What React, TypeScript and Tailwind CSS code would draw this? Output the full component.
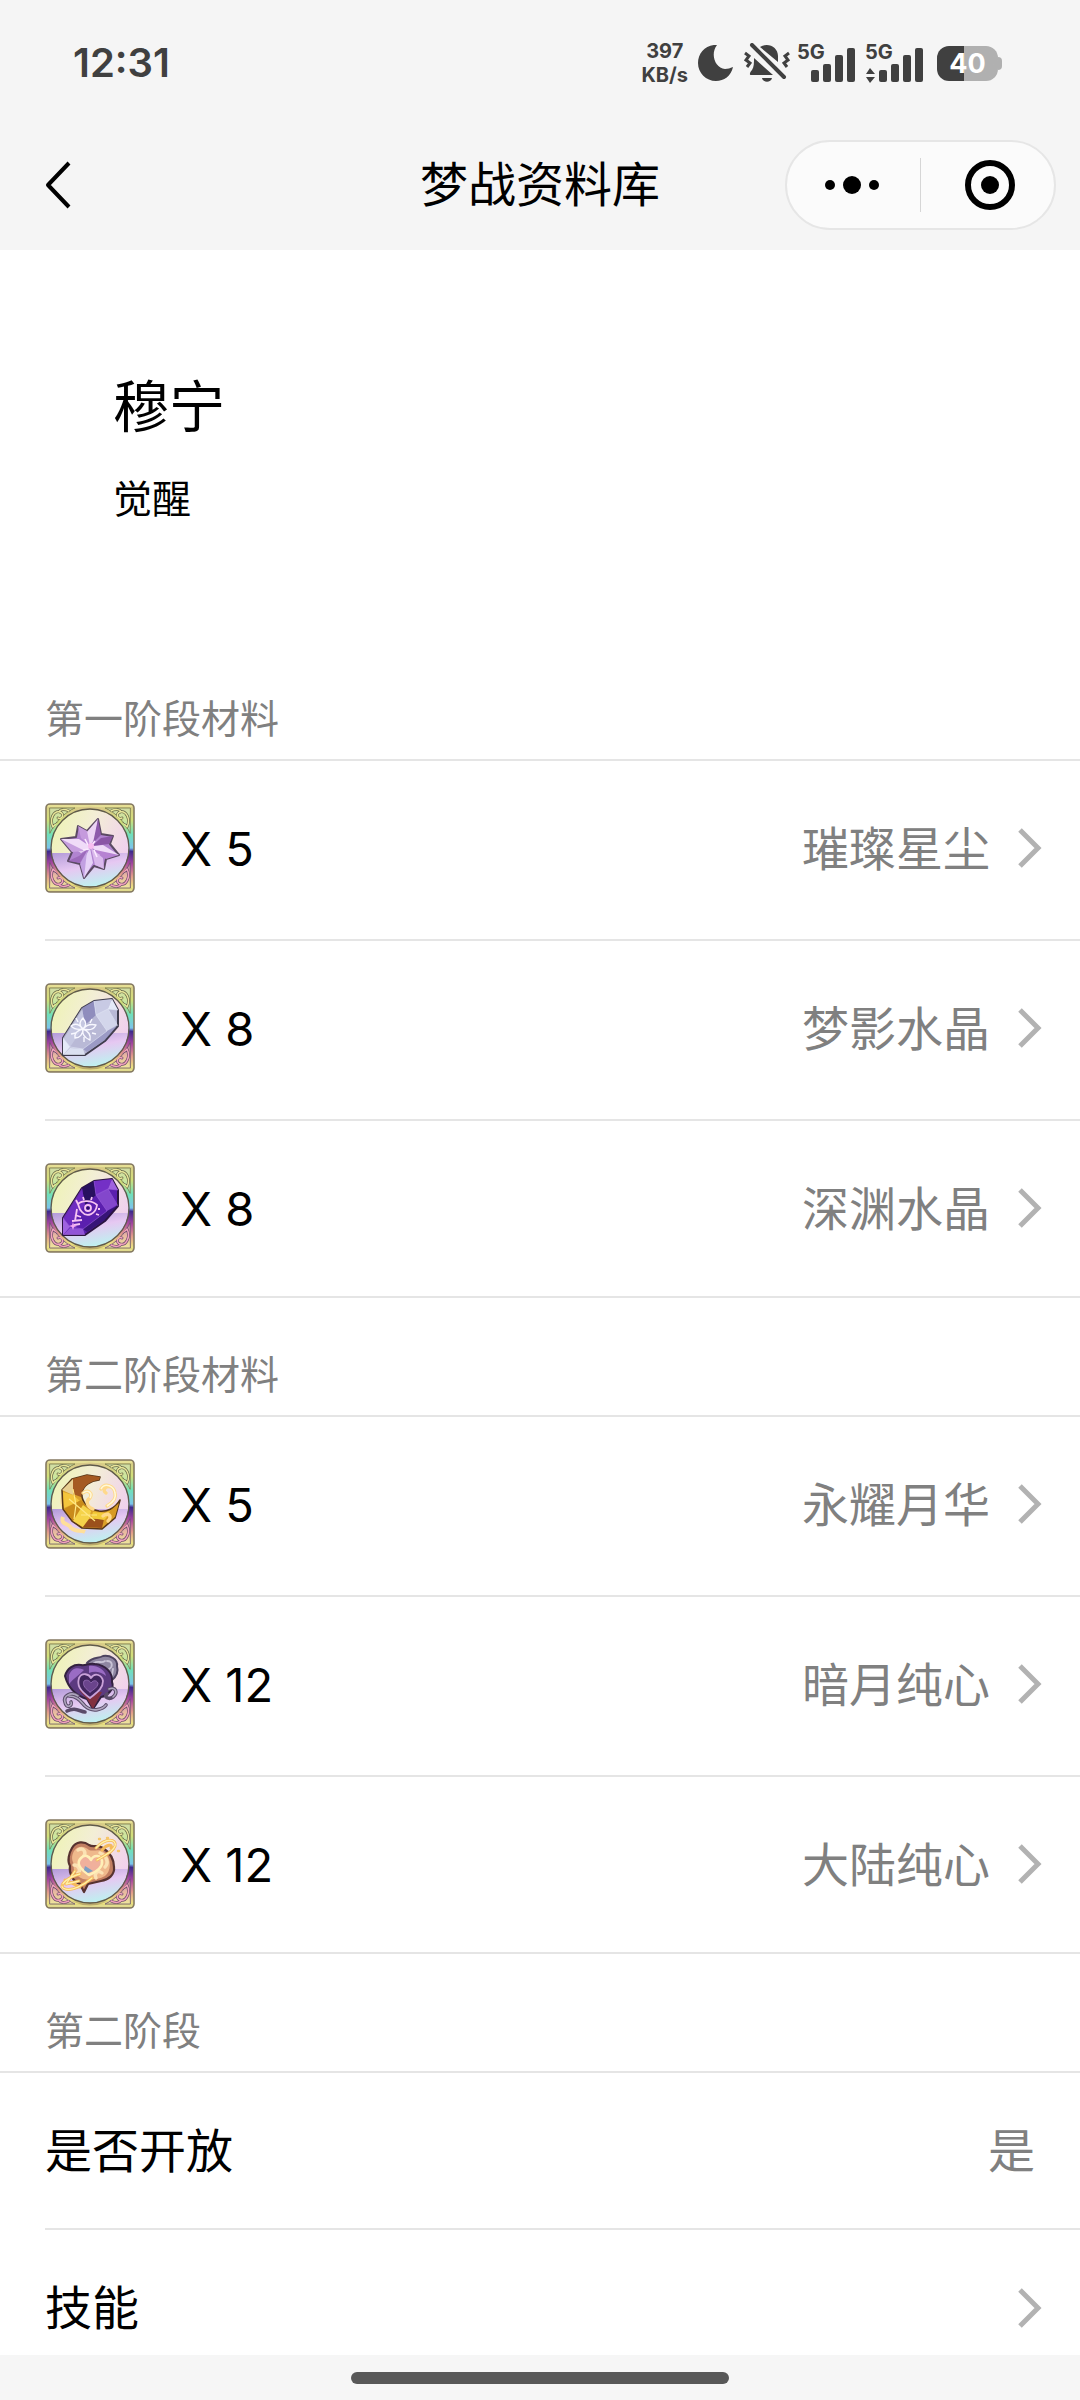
import React from "react";

interface Material {
  count: number;
  name: string;
  art: React.ReactNode;
}

const StarArt = () => (
  <g strokeLinejoin="round">
    <path d="M53 16 56 31 68 33 65 41 74 52 61 56 59 66 49 63 39 75 35 61 23 58 27 49 16 36 31 34 33 23 42 28Z" fill="#b184d0" stroke="#5b4a63" strokeWidth="2" />
    <path d="M53 16 50 36 42 46 41 30Z" fill="#ecd4f5" />
    <path d="M53 16 56 32 48 40Z" fill="#8d5aab" />
    <path d="M16 36 34 36 46 44 36 50Z" fill="#f0dcf8" />
    <path d="M16 36 27 49 40 48Z" fill="#c79fdf" />
    <path d="M74 52 58 42 46 43 54 52Z" fill="#efdbf8" />
    <path d="M74 52 61 56 46 46Z" fill="#b682d2" />
    <path d="M39 75 38 58 45 45 48 60Z" fill="#e6d2f7" />
    <path d="M39 75 35 61 42 48Z" fill="#c2a0e2" />
    <path d="M33 23 36 35 45 43 42 28Z" fill="#c59add" />
    <path d="M68 33 56 35 47 43 64 41Z" fill="#8a56a6" />
    <path d="M59 66 58 55 46 45 50 62Z" fill="#dab9ec" />
    <path d="M23 58 34 53 43 46 35 60Z" fill="#9d6abb" />
    <path d="M40 36 43 42M50 38 46 43M38 47 44 46M49 47 52 54" stroke="#fbeaff" strokeWidth="1.6" fill="none" />
    <circle cx="46" cy="43" r="3" fill="#f7bdf0" />
  </g>
);

interface CrystalProps {
  base: string;
  dark: string;
  mid: string;
  light: string;
  outline: string;
  children: React.ReactNode;
}

const CrystalArt = ({ base, dark, mid, light, outline, children }: CrystalProps) => (
  <g strokeLinejoin="round">
    <path d="M18 55 37 25 49 18 67 16 73 27 73 43 60 58 40 72 18 72Z" fill={base} stroke={outline} strokeWidth="2" />
    <path d="M37 25 49 18 51 32 40 42Z" fill={dark} />
    <path d="M49 18 67 16 63 26 51 32Z" fill={mid} />
    <path d="M67 16 73 27 63 26Z" fill={light} />
    <path d="M51 32 63 26 72 42 62 48Z" fill={light} opacity="0.6" />
    <path d="M62 48 72 43 60 57 42 69 38 66Z" fill={dark} opacity="0.7" />
    <path d="M18 55 37 25 40 42 25 64Z" fill={mid} opacity="0.8" />
    <path d="M18 55 25 64 18 72Z" fill={light} />
    <path d="M18 72 25 65 38 66 40 72Z" fill={light} opacity="0.8" />
    <path d="M49 18 51 32 62 48 38 66 25 64 18 55M51 32 63 26 73 27M63 26 73 43" fill="none" stroke={light} strokeWidth="0.8" opacity="0.7" />
    {children}
  </g>
);

const DreamCrystalArt = () => (
  <CrystalArt base="#b9b9d6" dark="#8f8dbd" mid="#c8cae4" light="#e4eaf8" outline="#3f3c4d">
    <g fill="none" stroke="#f8f8ff" strokeWidth="1.4">
      <path d="M38 46C33 42 35 38 38 35 41 39 42 42 38 46ZM38 46C42 41 47 41 51 42 49 46 45 48 38 46ZM38 46C43 48 46 52 45 57 40 55 37 51 38 46ZM38 46C38 51 35 55 30 55 29 51 32 47 38 46ZM38 46C33 47 29 46 26 43 30 40 34 41 38 46Z" />
      <path d="M33 39 31 35M45 40 47 36M47 50 51 51M39 54 39 59M31 50 26 51" />
    </g>
  </CrystalArt>
);

const AbyssCrystalArt = () => (
  <CrystalArt base="#5b1fae" dark="#28105f" mid="#7430c6" light="#9f62e0" outline="#2b1440">
    <g fill="none" stroke="#f7c4f2" strokeWidth="1.8">
      <path d="M33 41C37 37 47 37 52 42 51 51 42 55 37 49 34 47 34 43 33 41Z" />
      <path d="M33 41 31 37M39 37 38 34M46 37 47 34M51 51 54 52M53 46 55 46M32 46 30 58M27 58 37 57M30 52 36 54M29 62 35 61" />
      <circle cx="43" cy="45" r="3" />
    </g>
    <circle cx="43" cy="45" r="1.5" fill="#28105f" />
    <path d="M28 67 29 64 32 63 29 62 28 59 27 62 24 63 27 64Z" fill="#f3a8f5" />
  </CrystalArt>
);

const CrescentArt = () => (
  <g strokeLinejoin="round">
    <path d="M18 58C15 66 24 64 26 69 31 73 36 71 40 73M20 36C15 40 18 50 22 52" fill="none" stroke="#ffdf9a" strokeWidth="4" />
    <path d="M55 18 42 16 27 20 17 31 18 50 27 62 37 69 57 70 70 59 75 41C70 50 61 53 54 52 42 50 36 42 37 34 38 26 46 22 54 21Z" fill="#dba12a" stroke="#57371a" strokeWidth="1.6" />
    <path d="M55 18 42 16 27 20 28 35 36 38C37 27 45 22 54 21Z" fill="#a55a22" />
    <path d="M28 20 17 31 28 36Z" fill="#e8cf92" />
    <path d="M18 33 19 49 35 42 28 36Z" fill="#f4c53c" />
    <path d="M19 50 28 62 44 50 36 41Z" fill="#c98a1a" />
    <path d="M28 62 38 68 44 60 46 52 38 46Z" fill="#f5d34a" />
    <path d="M44 60 59 60 57 69 38 68Z" fill="#9b511c" />
    <path d="M48 53 60 54 70 50 59 61 46 59Z" fill="#f2cb3a" />
    <path d="M61 60 70 58 74 44 65 52Z" fill="#d89a22" />
    <path d="M24 40 36 50 50 62M28 30 31 46 29 60M36 56 52 56" fill="none" stroke="#ffe783" strokeWidth="1.2" />
    <path d="M38 34C43 30 48 34 45 39 40 42 42 48 48 50M56 30C60 23 69 27 70 34 72 40 67 44 62 47M66 28C60 26 57 32 61 34M58 57C63 53 68 57 63 62" fill="none" stroke="#ffd98a" strokeWidth="3.4" strokeLinecap="round" />
    <path d="M38 34C43 30 48 34 45 39M56 30C60 23 69 27 70 34 72 40 67 44 62 47" fill="none" stroke="#fff8d8" strokeWidth="1.6" />
  </g>
);

const DarkHeartArt = () => (
  <g strokeLinejoin="round" strokeLinecap="round">
    <path d="M42 24C48 17 53 20 58 17 65 16 73 20 72 27 74 34 70 39 66 42" fill="#8f86a2" stroke="#4d4260" strokeWidth="2" />
    <path d="M49 24C54 21 56 25 60 22M62 22C68 22 68 28 64 30M68 30 67 36" fill="none" stroke="#c9c3d6" strokeWidth="1.8" />
    <path d="M20 37C22 29 29 25 36 26 41 27 43 24 50 25 60 26 68 33 67 43 70 50 62 57 56 58L48 70 42 60C29 56 23 48 20 37Z" fill="#5c3a80" stroke="#33213f" strokeWidth="2" />
    <path d="M34 51 57 53 48 70 42 60Z" fill="#81303f" />
    <path d="M24 36C27 28 34 28 39 31 34 36 29 39 24 45ZM44 27C52 26 60 31 61 37 55 32 49 32 44 34Z" fill="#9a6cc4" />
    <path d="M45 59C34 51 32 46 34 39 37 33 44 35 46 39 50 33 57 36 58 42 58 50 51 54 45 59Z" fill="#40255d" stroke="#c9a2d8" strokeWidth="1.8" />
    <path d="M45 53C38 48 38 45 39 42 42 40 45 42 46 44 49 40 53 42 53 45 52 49 48 51 45 53Z" fill="#6a448c" stroke="#8d65ad" strokeWidth="1" />
    <path d="M33 57C26 52 18 57 20 63 21 70 28 67 26 63M24 57C33 57 36 63 40 67 48 74 58 70 61 66M22 72C30 68 34 72 40 73M64 50C71 47 73 54 68 58 64 61 58 58 62 55" fill="none" stroke="#5a4b69" strokeWidth="3.6" />
    <path d="M33 57C26 52 18 57 20 63 21 70 28 67 26 63M24 57C33 57 36 63 40 67 48 74 58 70 61 66M64 50C71 47 73 54 68 58" fill="none" stroke="#aea5bd" strokeWidth="1.6" />
  </g>
);

const LandHeartArt = () => (
  <g strokeLinejoin="round" strokeLinecap="round">
    <path d="M27 29C31 22 39 22 44 26 48 29 52 25 58 29 64 33 69 39 69 48 70 56 63 61 56 62L43 65 39 73 35 65C27 62 24 54 25 47 22 42 24 34 27 29Z" fill="#c27f62" stroke="#573230" strokeWidth="2.2" />
    <path d="M29 32C33 26 40 27 44 31 49 33 55 29 60 34 67 40 66 53 60 57 53 61 44 61 38 60 29 56 28 50 29 45 26 40 27 36 29 32Z" fill="#efb98c" />
    <path d="M33 31C39 28 42 34 38 38M55 34C62 37 64 44 60 48M29 46C34 46 36 52 33 54M57 54C52 50 49 55 51 59" fill="none" stroke="#fbe2b4" strokeWidth="3.4" />
    <path d="M44 56C34 49 31 44 36 39 40 35 44 37 46 41 49 35 56 36 57 42 58 48 51 53 44 56Z" fill="#f0b09c" stroke="#fff0b8" strokeWidth="2.6" />
    <path d="M40 47 48 52 43 54 39 51Z" fill="#7c9fc4" />
    <path d="M51 29C61 18 72 20 70 27 68 33 60 36 52 41M57 31C62 25 68 25 66 29M35 55C24 58 14 65 18 69 26 74 40 65 47 59M30 52 21 65 34 62M20 61 35 68" fill="none" stroke="#f5b95a" strokeWidth="3" />
    <path d="M51 29C61 18 72 20 70 27 68 33 60 36 52 41M35 55C24 58 14 65 18 69 26 74 40 65 47 59M30 52 21 65 34 62" fill="none" stroke="#fff1a8" strokeWidth="1.3" />
    <path d="M62 19h1M73 32h1M17 66h1M54 20h1" stroke="#f7c66a" strokeWidth="2.4" />
  </g>
);

const stageOne: Material[] = [
  { count: 5, name: "璀璨星尘", art: <StarArt /> },
  { count: 8, name: "梦影水晶", art: <DreamCrystalArt /> },
  { count: 8, name: "深渊水晶", art: <AbyssCrystalArt /> },
];

const stageTwo: Material[] = [
  { count: 5, name: "永耀月华", art: <CrescentArt /> },
  { count: 12, name: "暗月纯心", art: <DarkHeartArt /> },
  { count: 12, name: "大陆纯心", art: <LandHeartArt /> },
];

// Gradients and the corner ornament shared by all item frames
const FrameDefs = () => (
  <svg className="absolute size-0" aria-hidden="true">
    <defs>
      <linearGradient id="frame" x1="0" y1="0" x2="0" y2="1">
        <stop offset="0" stopColor="#d9c98a" />
        <stop offset="0.18" stopColor="#d3e07a" />
        <stop offset="0.34" stopColor="#6fe0b8" />
        <stop offset="0.5" stopColor="#7cc4ea" />
        <stop offset="0.54" stopColor="#3f2a8c" />
        <stop offset="0.68" stopColor="#a5469f" />
        <stop offset="0.82" stopColor="#e29a8c" />
        <stop offset="0.95" stopColor="#ece583" />
        <stop offset="1" stopColor="#b9a86a" />
      </linearGradient>
      <linearGradient id="discTop" x1="0" y1="0.2" x2="1" y2="0.6">
        <stop offset="0" stopColor="#eef3b4" />
        <stop offset="0.45" stopColor="#f3eed6" />
        <stop offset="1" stopColor="#f0cdf0" />
      </linearGradient>
      <linearGradient id="discBottom" x1="0" y1="0" x2="0.4" y2="1">
        <stop offset="0" stopColor="#b29ad8" />
        <stop offset="0.5" stopColor="#e6c8f2" />
        <stop offset="1" stopColor="#bff0f0" />
      </linearGradient>
      <g id="corner" fill="none" strokeLinecap="round">
        <path d="M5 5H30C19 10 10 19 5 30Z" fill="#c8f0d0" fillOpacity="0.4" stroke="#77784a" strokeWidth="0.8" />
        <path d="M8 24C4 16 9 7 15 9 20 11 17 17 13 15M24 8C20 6 15 6 14 9M8 24C10 20 16 21 17 17" stroke="#656548" strokeWidth="2.8" />
        <path d="M8 24C4 16 9 7 15 9 20 11 17 17 13 15M24 8C20 6 15 6 14 9M8 24C10 20 16 21 17 17" stroke="#e9e79a" strokeWidth="1.5" />
      </g>
      <g id="cornerPink" fill="none" strokeLinecap="round">
        <path d="M5 5H30C19 10 10 19 5 30Z" fill="#f2e8c0" fillOpacity="0.4" stroke="#6a5470" strokeWidth="0.8" />
        <path d="M8 24C4 16 9 7 15 9 20 11 17 17 13 15M24 8C20 6 15 6 14 9M8 24C10 20 16 21 17 17" stroke="#6f4d6c" strokeWidth="2.8" />
        <path d="M8 24C4 16 9 7 15 9 20 11 17 17 13 15M24 8C20 6 15 6 14 9M8 24C10 20 16 21 17 17" stroke="#f2a3bd" strokeWidth="1.5" />
      </g>
    </defs>
  </svg>
);

const ItemIcon = ({ children }: { children: React.ReactNode }) => (
  <svg viewBox="0 0 90 90" className="size-[90px] shrink-0" aria-hidden="true">
    <rect x="1" y="1" width="88" height="88" rx="4" fill="url(#frame)" stroke="#857a62" strokeWidth="1.6" />
    <path d="M3 3H87M3 87H87" stroke="#f0ee9f" strokeWidth="1.6" opacity="0.8" />
    <use href="#corner" />
    <use href="#corner" transform="translate(90 0) scale(-1 1)" />
    <use href="#cornerPink" transform="translate(0 90) scale(1 -1)" />
    <use href="#cornerPink" transform="translate(90 90) scale(-1 -1)" />
    <circle cx="45" cy="45" r="40" fill="url(#discTop)" />
    <path d="M5.3 50A40 40 0 0 0 84.7 50Z" fill="url(#discBottom)" />
    <circle cx="45" cy="45" r="40" fill="none" stroke="url(#frame)" strokeWidth="3" />
    <circle cx="45" cy="45" r="39" fill="none" stroke="#5f5a4c" strokeWidth="1.3" />
    {children}
  </svg>
);

const Chevron = () => (
  <svg viewBox="0 0 24 40" className="h-[40px] w-[24px] shrink-0" fill="none" stroke="#b2b2b2" strokeWidth="5" aria-hidden="true">
    <path d="M2 2 20 20 2 38" />
  </svg>
);

const SectionTitle = ({ children }: { children: React.ReactNode }) => (
  <h2 className="px-[45px] pt-[51px] pb-[14px] text-[39px] leading-[52px] text-[#808080]">{children}</h2>
);

const MaterialList = ({ items }: { items: Material[] }) => (
  <ul className="border-y-2 border-[#e5e5e5]">
    {items.map((item, i) => (
      <li key={item.name} className={i > 0 ? "group ml-[45px] border-t-2 border-[#e5e5e5]" : "group ml-[45px]"}>
        <button
          type="button"
          className="flex w-full items-center pt-[42px] pr-[38px] pb-[46px] text-left text-[47px] leading-[65px] group-last:pb-[43px]"
        >
          <ItemIcon>{item.art}</ItemIcon>
          <span className="ml-[45px] flex-1">X {item.count}</span>
          <span className="mr-[28px] text-[#808080]">{item.name}</span>
          <Chevron />
        </button>
      </li>
    ))}
  </ul>
);

const SignalBars = ({ data = false }: { data?: boolean }) => (
  <div className="relative h-[40px] w-[58px]">
    <span className="absolute top-0 left-0 text-[20px] leading-[18px] font-bold">5G</span>
    <svg viewBox="0 0 58 40" className="size-full" fill="#404040" aria-hidden="true">
      <rect x="14" y="27" width="8" height="12" rx="2" />
      <rect x="26" y="21" width="8" height="18" rx="2" />
      <rect x="38" y="12" width="8" height="27" rx="2" />
      <rect x="50" y="5" width="8" height="34" rx="2" />
      {data && <path d="M1 31 5 25 10 31ZM1 34 5 40 10 34Z" />}
    </svg>
  </div>
);

const StatusBar = () => (
  <div className="flex h-[126px] items-center justify-between pr-[78px] pl-[73px] text-[#404040]">
    <time className="text-[40px] leading-[48px] font-semibold">12:31</time>
    <div className="flex items-center">
      <div className="text-center text-[20px] leading-[24px] font-bold">
        <div>397</div>
        <div>KB/s</div>
      </div>
      <svg viewBox="0 0 36 36" className="ml-[10px] size-[36px]" fill="#404040" aria-label="勿扰">
        <path d="M19 0C12 9 17 23 27 24 30 24 32 23 35 22 33 31 26 36 18 36 8 36 0 28 0 18 0 8 8-1 19 0Z" />
      </svg>
      <svg viewBox="0 0 46 40" className="ml-[10px] h-[40px] w-[46px]" fill="#404040" aria-label="静音">
        <path d="M16 4C24-1 34 4 34 13V19ZM10 15 29 32H7C5 32 6 29 8 27 10 24 10 20 10 15ZM18 35H28C27 40 19 40 18 35Z" />
        <path d="M8 2 40 34" stroke="#404040" strokeWidth="4" strokeLinecap="round" />
        <path d="M1 10 5 13 2 17 6 20 3 24M45 10 41 13 44 17 40 20 43 24" fill="none" stroke="#404040" strokeWidth="3" />
      </svg>
      <div className="ml-[7px] flex gap-[10px]">
        <SignalBars />
        <SignalBars data />
      </div>
      <div className="ml-[14px] flex items-center">
        <div className="flex h-[35px] w-[61px] items-center justify-center rounded-[12px] bg-linear-to-r from-[#404040] from-44% to-[#b0b0b0] to-44% text-[27px] leading-none font-bold text-white">
          40
        </div>
        <div className="h-[13px] w-[4px] rounded-r-full bg-[#b0b0b0]" />
      </div>
    </div>
  </div>
);

const NavBar = () => (
  <div className="grid h-[124px] grid-cols-[1fr_auto_1fr] items-start px-[24px] pt-[14px]">
    <button type="button" aria-label="返回" className="flex h-[90px] w-[80px] items-center pl-[21px]">
      <svg viewBox="0 0 26 48" className="h-[48px] w-[26px]" fill="none" stroke="#000" strokeWidth="4" strokeLinejoin="round">
        <path d="M24 2 3 24 24 46" />
      </svg>
    </button>
    <h1 className="text-[48px] leading-[90px]">梦战资料库</h1>
    <div className="flex h-[90px] w-[271px] items-center justify-self-end rounded-full border-2 border-[#e6e6e6] bg-[#fbfbfb]">
      <button type="button" aria-label="更多" className="flex flex-1 justify-center pr-[4px]">
        <svg viewBox="0 0 54 18" className="h-[18px] w-[54px]">
          <circle cx="5" cy="9" r="5" />
          <circle cx="27" cy="9" r="9" />
          <circle cx="49" cy="9" r="5" />
        </svg>
      </button>
      <div className="h-[54px] w-px bg-[#d6d6d6]" />
      <button type="button" aria-label="关闭" className="flex flex-1 justify-center pl-[4px]">
        <svg viewBox="0 0 50 50" className="size-[50px]">
          <circle cx="25" cy="25" r="22" fill="none" stroke="#000" strokeWidth="6" />
          <circle cx="25" cy="25" r="9" />
        </svg>
      </button>
    </div>
  </div>
);

export default function App() {
  return (
    <div className="flex h-screen flex-col bg-white font-[Inter,'Noto_Sans_CJK_SC',sans-serif] text-black">
      <FrameDefs />
      <header className="shrink-0 bg-[#f5f5f5]">
        <StatusBar />
        <NavBar />
      </header>

      <main className="min-h-0 flex-1 overflow-hidden">
        <div className="px-[113px] pt-[125px] pb-[117px]">
          <p className="text-[56px] leading-[64px]">穆宁</p>
          <p className="mt-[34px] text-[39px] leading-[52px]">觉醒</p>
        </div>

        <SectionTitle>第一阶段材料</SectionTitle>
        <MaterialList items={stageOne} />

        <SectionTitle>第二阶段材料</SectionTitle>
        <MaterialList items={stageTwo} />

        <SectionTitle>第二阶段</SectionTitle>
        <ul className="border-t-2 border-[#e5e5e5] text-[47px] leading-[65px]">
          <li className="ml-[45px] flex justify-between py-[45px] pr-[45px]">
            <span>是否开放</span>
            <span className="text-[#808080]">是</span>
          </li>
          <li className="ml-[45px] border-t-2 border-[#e5e5e5]">
            <button type="button" className="flex w-full items-center justify-between py-[45px] pr-[38px]">
              <span>技能</span>
              <Chevron />
            </button>
          </li>
        </ul>
      </main>

      <footer className="flex h-[45px] shrink-0 items-center justify-center bg-[#f6f6f6]">
        <div className="h-[12px] w-[35%] rounded-full bg-[#585858]" />
      </footer>
    </div>
  );
}
